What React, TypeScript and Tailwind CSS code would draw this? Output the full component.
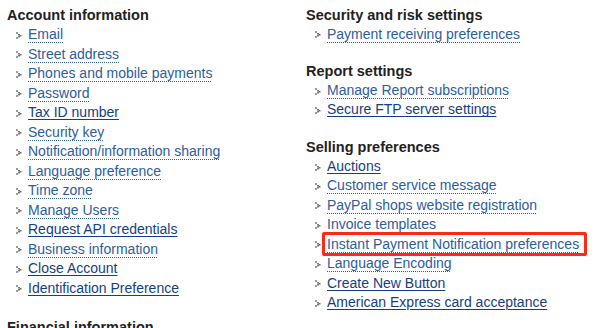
import React from 'react'

type Item = { label: string; solid?: boolean; boxed?: boolean }
type Section = { title: string; items: Item[] }

const LEFT: Section[] = [
  {
    title: 'Account information',
    items: [
      { label: 'Email' },
      { label: 'Street address' },
      { label: 'Phones and mobile payments' },
      { label: 'Password' },
      { label: 'Tax ID number', solid: true },
      { label: 'Security key' },
      { label: 'Notification/information sharing' },
      { label: 'Language preference' },
      { label: 'Time zone' },
      { label: 'Manage Users' },
      { label: 'Request API credentials', solid: true },
      { label: 'Business information' },
      { label: 'Close Account', solid: true },
      { label: 'Identification Preference', solid: true },
    ],
  },
  { title: 'Financial information', items: [] },
]

const RIGHT: Section[] = [
  { title: 'Security and risk settings', items: [{ label: 'Payment receiving preferences' }] },
  {
    title: 'Report settings',
    items: [{ label: 'Manage Report subscriptions' }, { label: 'Secure FTP server settings', solid: true }],
  },
  {
    title: 'Selling preferences',
    items: [
      { label: 'Auctions', solid: true },
      { label: 'Customer service message' },
      { label: 'PayPal shops website registration' },
      { label: 'Invoice templates' },
      { label: 'Instant Payment Notification preferences', boxed: true },
      { label: 'Language Encoding' },
      { label: 'Create New Button', solid: true },
      { label: 'American Express card acceptance', solid: true },
    ],
  },
]

// little grey chevron used as list marker
function Bullet() {
  return (
    <svg width="6" height="7" viewBox="0 0 6 7" className="shrink-0 mt-[1px]">
      <rect x="0" y="0" width="2" height="2" fill="#9a9a9a" />
      <rect x="2" y="2" width="2" height="1.5" fill="#7a7a7a" />
      <rect x="3.5" y="3" width="2" height="1.5" fill="#6a6a6a" />
      <rect x="2" y="4" width="2" height="1.5" fill="#7a7a7a" />
      <rect x="0" y="5" width="2" height="2" fill="#9a9a9a" />
    </svg>
  )
}

function Block({ s, tight }: { s: Section; tight?: boolean }) {
  return (
    <div className={tight ? 'mb-[18.5px]' : 'mb-[19.5px]'}>
      <h2 className={`font-bold text-[#222] text-[14.5px] ${tight ? 'leading-[18.5px]' : 'leading-[19px]'}`}>{s.title}</h2>
      <ul>
        {s.items.map(it => (
          <li
            key={it.label}
            className={`relative flex items-center gap-[6px] pl-[9px] ${tight ? 'leading-[19.45px]' : 'leading-[19.5px]'}`}
          >
            <Bullet />
            <a
              href="#"
              className={
                it.solid
                  ? 'text-[#163e82] underline underline-offset-[2px] decoration-[1px]'
                  : 'text-[#2d5d9f] underline decoration-dotted underline-offset-[3px] decoration-[1px]'
              }
            >
              {it.label}
            </a>
            {it.boxed && (
              <span className="absolute left-[16px] top-[-3px] w-[265px] h-[24px] border-[3px] border-[#ff2a14] rounded-[2px]" />
            )}
          </li>
        ))}
      </ul>
    </div>
  )
}

export default function App() {
  return (
    <div
      className="w-[600px] h-[328px] overflow-hidden bg-white flex pt-[6px] text-[14px]"
      style={{ fontFamily: '"Liberation Sans", Arial, sans-serif' }}
    >
      <div className="w-[299px] pl-[7px] shrink-0">
        {LEFT.map(s => <Block key={s.title} s={s} />)}
      </div>
      <div className="flex-1 pl-[7px]">
        {RIGHT.map(s => <Block key={s.title} s={s} tight />)}
      </div>
    </div>
  )
}
